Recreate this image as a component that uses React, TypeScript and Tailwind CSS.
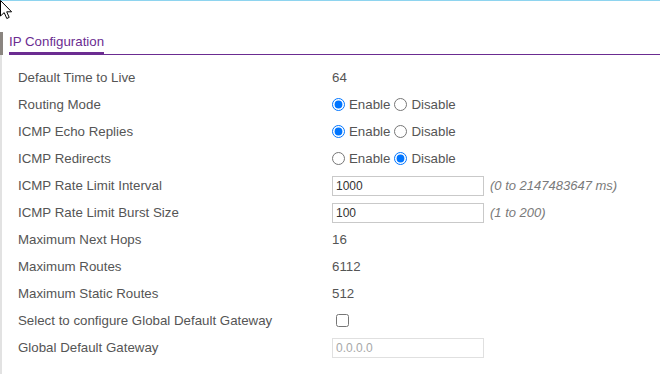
import React from "react";

type Row = {
    label: string;
    kind: "text" | "radio" | "input" | "check" | "disabled";
    value?: string;
    enabled?: boolean;
    hint?: string;
};

const rows: Row[] = [
    { label: "Default Time to Live", kind: "text", value: "64" },
    { label: "Routing Mode", kind: "radio", enabled: true },
    { label: "ICMP Echo Replies", kind: "radio", enabled: true },
    { label: "ICMP Redirects", kind: "radio", enabled: false },
    { label: "ICMP Rate Limit Interval", kind: "input", value: "1000", hint: "(0 to 2147483647 ms)" },
    { label: "ICMP Rate Limit Burst Size", kind: "input", value: "100", hint: "(1 to 200)" },
    { label: "Maximum Next Hops", kind: "text", value: "16" },
    { label: "Maximum Routes", kind: "text", value: "6112" },
    { label: "Maximum Static Routes", kind: "text", value: "512" },
    { label: "Select to configure Global Default Gateway", kind: "check" },
    { label: "Global Default Gateway", kind: "disabled", value: "0.0.0.0" },
];

function Cursor() {
    return (
        <svg className="absolute left-0 top-0" width="14" height="20" viewBox="0 0 14 20">
            <path
                d="M0.5 0.5 L0.5 16 L4.2 12.6 L6.8 18.5 L9.2 17.4 L6.7 11.8 L11.6 11.8 Z"
                fill="#fff"
                stroke="#000"
                strokeWidth="1"
                strokeLinejoin="miter"
            />
        </svg>
    );
}

function Value({ row, idx }: { row: Row; idx: number }) {
    if (row.kind === "radio") {
        return (
            <div className="flex items-center">
                <input type="radio" name={`r${idx}`} defaultChecked={row.enabled} className="m-0 w-[13px] h-[13px]" />
                <span className="ml-[4px]">Enable</span>
                <input type="radio" name={`r${idx}`} defaultChecked={!row.enabled} className="m-0 ml-[4px] w-[13px] h-[13px]" />
                <span className="ml-[4px]">Disable</span>
            </div>
        );
    }
    if (row.kind === "input") {
        return (
            <div className="flex items-center">
                <input
                    type="text"
                    defaultValue={row.value}
                    className="w-[152px] h-[20px] border border-[#c9c9c9] px-[3px] text-[12px] text-[#333] outline-none"
                />
                <span className="ml-[6px] text-[13px] italic text-[#7a7a7a]">{row.hint}</span>
            </div>
        );
    }
    if (row.kind === "check") {
        return <input type="checkbox" className="m-0 ml-[4px] w-[13px] h-[13px]" />;
    }
    if (row.kind === "disabled") {
        return (
            <input
                type="text"
                disabled
                placeholder={row.value}
                className="w-[152px] h-[20px] border border-[#e0e0e0] bg-white px-[3px] text-[12px] placeholder:text-[#a8a8a8] outline-none"
            />
        );
    }
    return <span>{row.value}</span>;
}

export default function App() {
    return (
        <div className="relative w-[660px] h-[374px] bg-white overflow-hidden font-['Liberation_Sans',Arial,sans-serif] text-[13.3px] text-[#555]">
            <div className="h-px bg-[#8ed4ef]" />
            <div className="mt-[31px] h-[342px] border-l-2 border-[#e2e2e2]">
                <div className="-ml-[2px] border-l-[3px] border-[#8a8580] pl-[6px]">
                    <div className="flex border-b border-[#6b2c91]">
                        <span className="-mb-px pt-[2px] pb-[3px] leading-[15px] border-b-[3px] border-[#6b2c91] text-[#6b2c91]">
                            IP Configuration
                        </span>
                    </div>
                </div>
                <div className="pt-[9px] pl-[16px]">
                    {rows.map((row, i) => (
                        <div key={row.label} className="grid grid-cols-[314px_1fr] h-[27px] items-center">
                            <span>{row.label}</span>
                            <Value row={row} idx={i} />
                        </div>
                    ))}
                </div>
            </div>
            <Cursor />
        </div>
    );
}
